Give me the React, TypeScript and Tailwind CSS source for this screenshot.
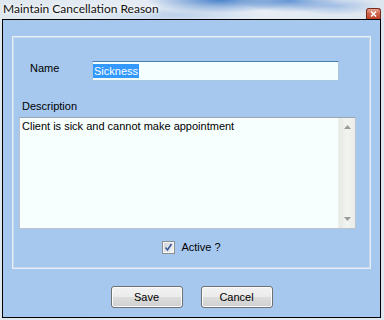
export default function App() {
  return (
    <div
      className="w-[384px] h-[320px] flex flex-col overflow-hidden bg-[radial-gradient(ellipse_75px_13px_at_220px_0px,#4a82cb,transparent),radial-gradient(ellipse_50px_11px_at_290px_1px,#6796d5,transparent),radial-gradient(ellipse_45px_9px_at_335px_6px,#a3bfe5,transparent),radial-gradient(ellipse_90px_10px_at_175px_15px,#bcd1ea,transparent),linear-gradient(to_right,#dfe7ef,#e9eff6_60%,#dde6ef)]"
      style={{ fontFamily: '"Liberation Sans", Arial, sans-serif' }}
    >
      {/* Title bar */}
      <div className="h-[19px] flex items-start justify-between shrink-0">
        <span
          className="ml-[3px] mt-[1px] text-[12px] leading-[15px] text-[#111] [text-shadow:0_0_5px_#fff,0_0_3px_#fff]"
          style={{ fontFamily: 'Lato, "Noto Sans", sans-serif' }}
        >
          Maintain Cancellation Reason
        </span>
        <div className="mt-[8px] mr-[3px] w-[15px] h-[11px] rounded-t-[3px] border border-b-0 border-[#7a2a1c] bg-[linear-gradient(#e9a590,#d0664c_45%,#c1432b)] flex items-center justify-center">
          <svg width="7" height="6" viewBox="0 0 7 6">
            <path d="M1 0.5 L6 5.5 M6 0.5 L1 5.5" stroke="#fff" strokeWidth="1.6" />
          </svg>
        </div>
      </div>

      {/* Client area */}
      <div className="ml-[2px] mr-[3px] mb-[2px] flex-1 border border-black bg-[#a6c8ef] flex flex-col">
        {/* Group box */}
        <div className="ml-[9px] mt-[16px] w-[359px] h-[233px] border border-[#e6eef8] shadow-[inset_0_0_0_1px_#c9d9ec] flex flex-col text-[11px] leading-[13px] text-black">
          {/* Name */}
          <div className="flex items-start mt-[24px] pl-[17px]">
            <span className="w-[62px] mt-[1px]">Name</span>
            <div className="w-[247px] h-[20px] border border-[#a9c6e0] border-t-[#4a7eb0] bg-[#f5fefe] pt-[2px]">
              <span className="inline-block bg-[#3399ff] text-white leading-[14px] px-[1px]">Sickness</span>
            </div>
          </div>

          {/* Description */}
          <span className="ml-[9px] mt-[19px]">Description</span>
          <div className="ml-[6px] mt-[4px] w-[337px] h-[112px] border border-[#b9c4cf] border-t-[#9aa6b2] bg-[#f7fffe] flex">
            <div className="flex-1 pl-[2px] pt-[2px]">Client is sick and cannot make appointment</div>
            <div className="w-[17px] bg-[linear-gradient(to_right,#e6ebe4,#f2f4f0_50%,#e9ece8)] border-l border-[#eef0ee] flex flex-col items-center justify-between py-[7px]">
              <svg width="7" height="4" viewBox="0 0 7 4">
                <path d="M0 4 L3.5 0 L7 4 Z" fill="#9a9a9a" />
              </svg>
              <svg width="7" height="4" viewBox="0 0 7 4">
                <path d="M0 0 L3.5 4 L7 0 Z" fill="#9a9a9a" />
              </svg>
            </div>
          </div>

          {/* Active */}
          <div className="mt-[12px] flex items-center justify-center">
            <div className="w-[13px] h-[13px] border border-[#8e8f8f] bg-[linear-gradient(135deg,#cfd3d6,#f4f4f4)] shadow-[inset_0_0_0_1px_#f4f4f4] flex items-center justify-center">
              <svg width="9" height="9" viewBox="0 0 9 9">
                <path d="M1.5 4.5 L3.5 7 L7.5 1" fill="none" stroke="#3c5a9a" strokeWidth="1.6" />
              </svg>
            </div>
            <span className="ml-[6px]">Active ?</span>
          </div>
        </div>

        {/* Buttons */}
        <div className="mt-[17px] flex justify-center gap-[18px] text-[11px] text-black">
          {['Save', 'Cancel'].map((label) => (
            <button
              key={label}
              className="w-[72px] h-[22px] rounded-[3px] border border-[#707070] bg-[linear-gradient(#f2f2f2,#ebebeb_50%,#dddddd_50%,#cfcfcf)] shadow-[inset_0_0_0_1px_#fcfcfc] leading-[13px]"
            >
              {label}
            </button>
          ))}
        </div>
      </div>
    </div>
  );
}
